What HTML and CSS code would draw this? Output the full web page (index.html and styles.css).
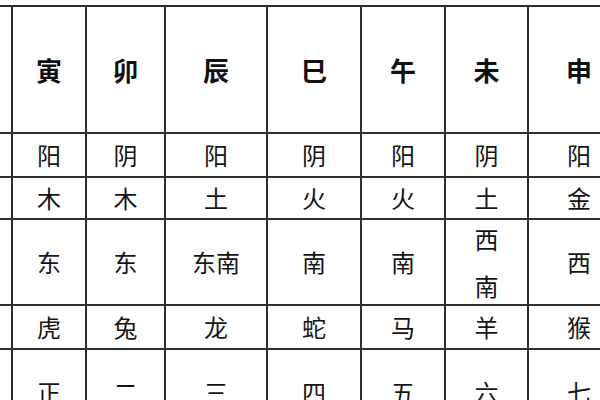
FILE: index.html
```html
<!DOCTYPE html>
<html lang="zh-CN">
<head>
<meta charset="utf-8">
<title>地支表</title>
<link rel="stylesheet" href="styles.css">
</head>
<body>
<div class="table">
  <div class="cell head"></div>
  <div class="cell head">寅</div>
  <div class="cell head">卯</div>
  <div class="cell head">辰</div>
  <div class="cell head">巳</div>
  <div class="cell head">午</div>
  <div class="cell head">未</div>
  <div class="cell head">申</div>

  <div class="cell"></div>
  <div class="cell">阳</div>
  <div class="cell">阴</div>
  <div class="cell">阳</div>
  <div class="cell">阴</div>
  <div class="cell">阳</div>
  <div class="cell">阴</div>
  <div class="cell">阳</div>

  <div class="cell"></div>
  <div class="cell">木</div>
  <div class="cell">木</div>
  <div class="cell">土</div>
  <div class="cell">火</div>
  <div class="cell">火</div>
  <div class="cell">土</div>
  <div class="cell">金</div>

  <div class="cell"></div>
  <div class="cell">东</div>
  <div class="cell">东</div>
  <div class="cell">东南</div>
  <div class="cell">南</div>
  <div class="cell">南</div>
  <div class="cell stack">西<br>南</div>
  <div class="cell">西</div>

  <div class="cell"></div>
  <div class="cell">虎</div>
  <div class="cell">兔</div>
  <div class="cell">龙</div>
  <div class="cell">蛇</div>
  <div class="cell">马</div>
  <div class="cell">羊</div>
  <div class="cell">猴</div>

  <div class="cell"></div>
  <div class="cell">正</div>
  <div class="cell">二</div>
  <div class="cell">三</div>
  <div class="cell">四</div>
  <div class="cell">五</div>
  <div class="cell">六</div>
  <div class="cell">七</div>
</div>
</body>
</html>
```
FILE: styles.css
```css
html, body {
  margin: 0;
  padding: 0;
  background: #fff;
  overflow: hidden;
  width: 600px;
  height: 400px;
}

.table {
  margin-top: 5px;
  width: 640px;
  display: grid;
  grid-template-columns: 11px 72px 77px 100px 92px 82px 81px 100px;
  grid-template-rows: 125px 42px 40px 84px 42px 84px;
  gap: 2px;
  padding-top: 2px;
  background: #2e2e2e;
  font-family: "Noto Sans CJK SC", "Noto Sans CJK TC", sans-serif;
  color: #151515;
}

.cell {
  background: #fff;
  display: flex;
  align-items: center;
  justify-content: center;
  text-align: center;
  font-size: 24px;
  line-height: 1;
}

.head {
  font-size: 26px;
  font-weight: 700;
  color: #111;
}

.stack {
  line-height: 47px;
}
```
